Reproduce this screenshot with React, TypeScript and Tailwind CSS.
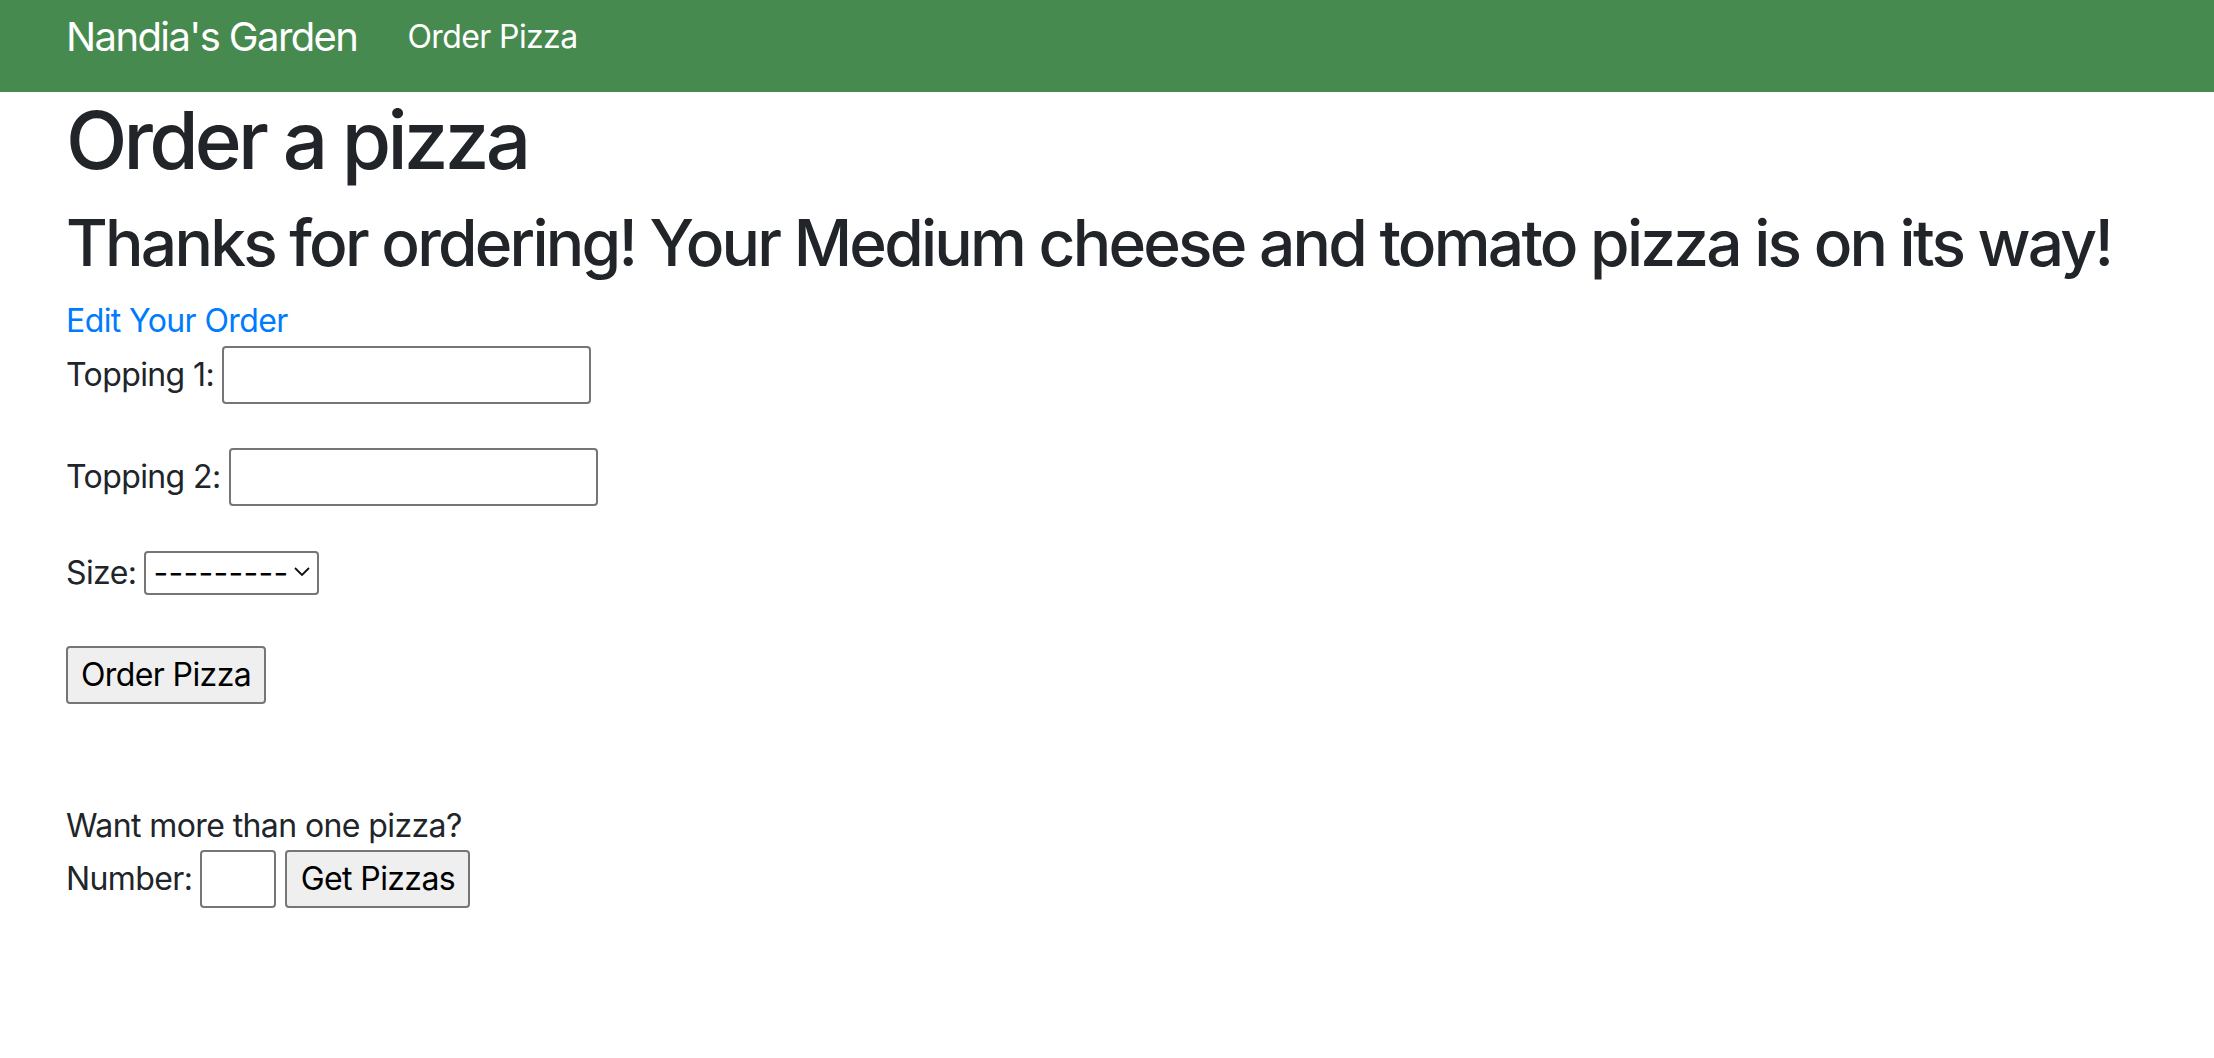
import React from "react";

export default function App() {
  return (
    <div className="min-h-screen bg-white font-['Inter','Liberation_Sans',sans-serif] tracking-[-0.6px] text-[#212529]">
      <nav className="h-[92px] bg-[#478a4f] pl-[66px] pt-[13px]">
        <div className="flex h-[48px] items-center">
          <a href="#" className="mr-[50px] text-[40px] leading-[48px] tracking-[-1.6px] text-white">
            Nandia's Garden
          </a>
          <a href="#" className="text-[32px] leading-[48px] text-white">
            Order Pizza
          </a>
        </div>
      </nav>

      <main className="pl-[66px]">
        <h1 className="mb-4 text-[80px] font-medium leading-[96px] tracking-[-3.8px]">Order a pizza</h1>
        <h2 className="mb-4 whitespace-nowrap text-[64px] font-medium leading-[77px] tracking-[-2.75px]">
          Thanks for ordering! Your Medium cheese and tomato pizza is on its way!
        </h2>
        <a href="#" className="block text-[32px] leading-[48px] text-[#007bff]">
          Edit Your Order
        </a>

        <form className="text-[32px] leading-[48px]">
          <div className="mt-px flex h-[58px] items-center gap-2">
            <label htmlFor="topping1">Topping 1:</label>
            <input
              id="topping1"
              type="text"
              className="h-[58px] w-[369px] rounded-[4px] border-2 border-[#767676] bg-white px-1"
            />
          </div>
          <div className="mt-[44px] flex h-[58px] items-center gap-2">
            <label htmlFor="topping2">Topping 2:</label>
            <input
              id="topping2"
              type="text"
              className="h-[58px] w-[369px] rounded-[4px] border-2 border-[#767676] bg-white px-1"
            />
          </div>
          <div className="mt-[45px] flex h-[44px] items-center gap-2">
            <label htmlFor="size">Size:</label>
            <div className="relative">
              <select
                id="size"
                className="h-[44px] w-[175px] appearance-none rounded-[4px] border-2 border-[#767676] bg-white pl-[7px] text-[32px] leading-[40px] tracking-[0.3px] text-black"
              >
                <option>---------</option>
                <option>Small</option>
                <option>Medium</option>
                <option>Large</option>
              </select>
              <svg
                className="pointer-events-none absolute right-[9px] top-[18px]"
                width="16"
                height="9"
                viewBox="0 0 16 9"
                fill="none"
                stroke="#111"
                strokeWidth="1.8"
              >
                <path d="M1 1l7 7 7-7" />
              </svg>
            </div>
          </div>
          <button
            type="button"
            className="mt-[51px] h-[58px] w-[200px] rounded-[4px] border-2 border-[#767676] bg-[#efefef] text-black"
          >
            Order Pizza
          </button>

          <p className="mt-[98px]">Want more than one pizza?</p>
          <div className="flex h-[58px] items-center">
            <label htmlFor="num" className="mr-2">Number:</label>
            <input
              id="num"
              type="number"
              className="h-[58px] w-[76px] rounded-[4px] border-2 border-[#767676] bg-white px-1"
            />
            <button
              type="button"
              className="ml-[9px] h-[58px] w-[185px] rounded-[4px] border-2 border-[#767676] bg-[#efefef] text-black"
            >
              Get Pizzas
            </button>
          </div>
        </form>
      </main>
    </div>
  );
}
